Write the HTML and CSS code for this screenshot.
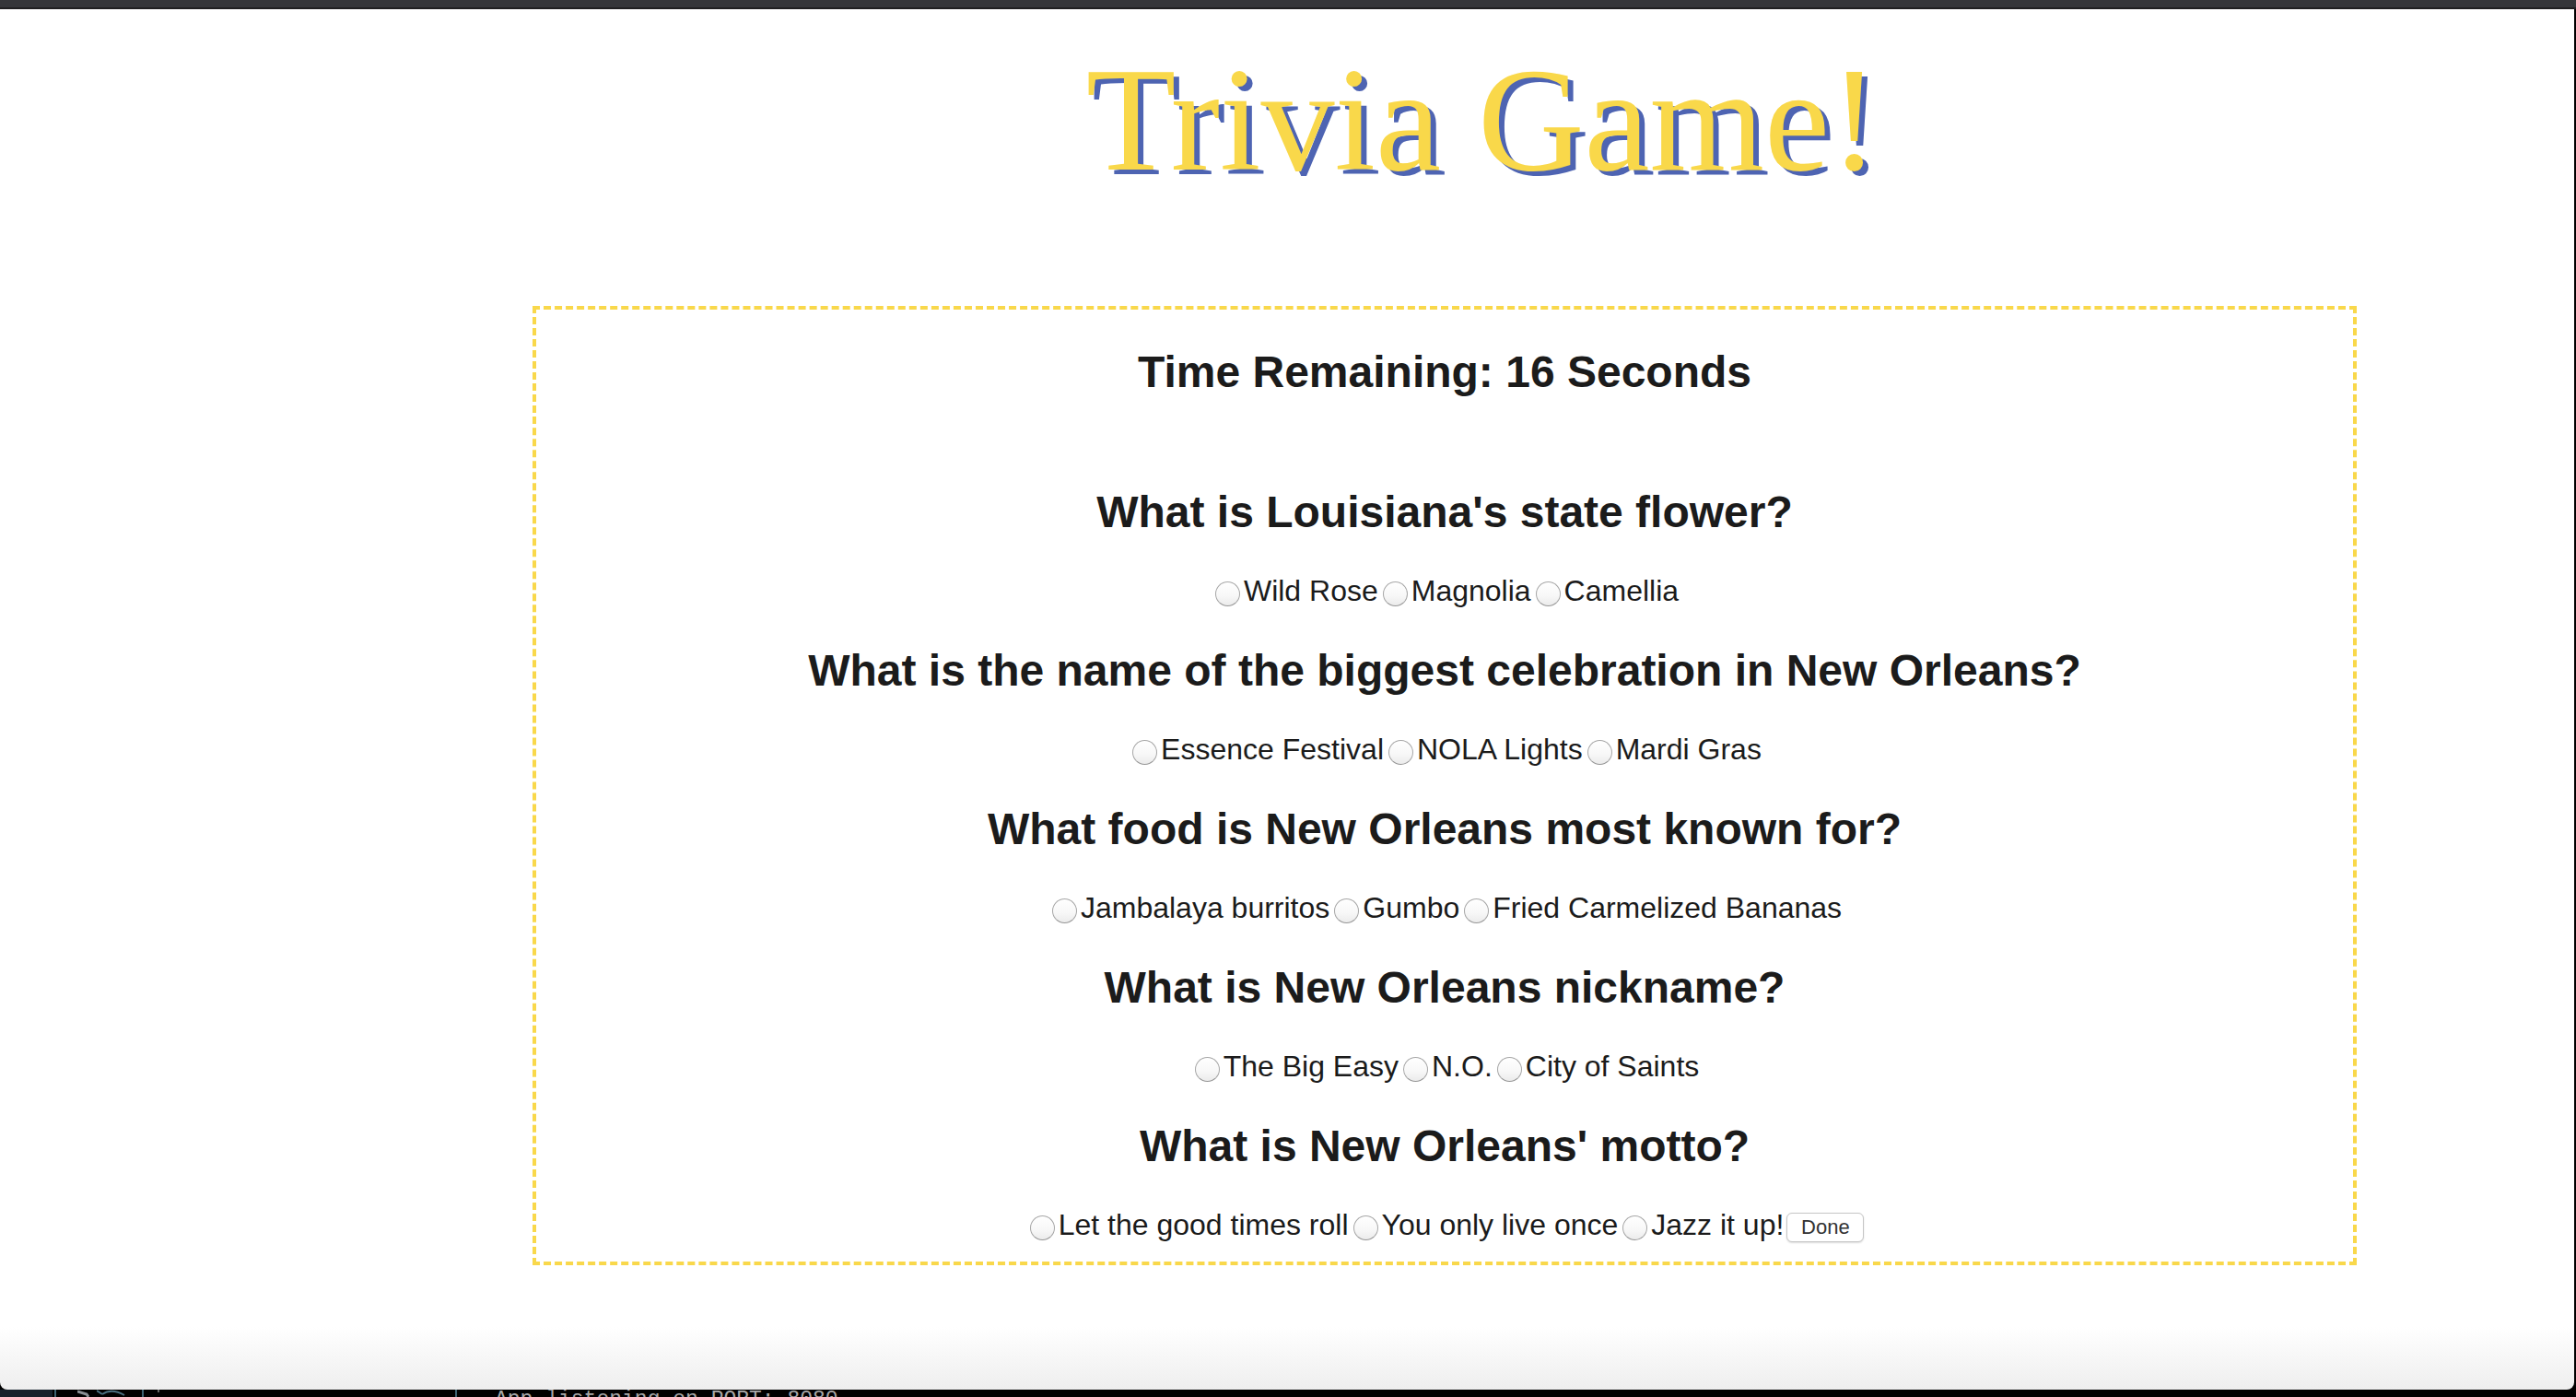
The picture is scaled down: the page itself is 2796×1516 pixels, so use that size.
FILE: index.html
```html
<!DOCTYPE html>
<html lang="en">
<head>
<meta charset="utf-8">
<title>Trivia Game</title>
<link rel="stylesheet" href="styles.css">
</head>
<body>
<div class="screen">
  <div class="topbar"></div>
  <div class="middle">
    <main class="page">
      <header class="header">
        <h1 class="title">Trivia Game!</h1>
      </header>
      <section class="quiz">
        <h2 class="timer">Time Remaining: 16 Seconds</h2>

        <div class="question">
          <h3 class="q-text">What is Louisiana's state flower?</h3>
          <div class="options">
            <label class="option"><input type="radio" name="q1" class="radio">Wild Rose</label>
            <label class="option"><input type="radio" name="q1" class="radio">Magnolia</label>
            <label class="option"><input type="radio" name="q1" class="radio">Camellia</label>
          </div>
        </div>

        <div class="question">
          <h3 class="q-text">What is the name of the biggest celebration in New Orleans?</h3>
          <div class="options">
            <label class="option"><input type="radio" name="q2" class="radio">Essence Festival</label>
            <label class="option"><input type="radio" name="q2" class="radio">NOLA Lights</label>
            <label class="option"><input type="radio" name="q2" class="radio">Mardi Gras</label>
          </div>
        </div>

        <div class="question">
          <h3 class="q-text">What food is New Orleans most known for?</h3>
          <div class="options">
            <label class="option"><input type="radio" name="q3" class="radio">Jambalaya burritos</label>
            <label class="option"><input type="radio" name="q3" class="radio">Gumbo</label>
            <label class="option"><input type="radio" name="q3" class="radio">Fried Carmelized Bananas</label>
          </div>
        </div>

        <div class="question">
          <h3 class="q-text">What is New Orleans nickname?</h3>
          <div class="options">
            <label class="option"><input type="radio" name="q4" class="radio">The Big Easy</label>
            <label class="option"><input type="radio" name="q4" class="radio">N.O.</label>
            <label class="option"><input type="radio" name="q4" class="radio">City of Saints</label>
          </div>
        </div>

        <div class="question">
          <h3 class="q-text">What is New Orleans' motto?</h3>
          <div class="options">
            <label class="option"><input type="radio" name="q5" class="radio">Let the good times roll</label>
            <label class="option"><input type="radio" name="q5" class="radio">You only live once</label>
            <label class="option"><input type="radio" name="q5" class="radio">Jazz it up!</label>
            <button class="done" type="button">Done</button>
          </div>
        </div>
      </section>
    </main>
    <div class="edge"></div>
  </div>
  <footer class="terminal">
    <div class="term-block"></div>
    <div class="term-sep sep-a"></div>
    <svg class="term-icon icon-a" width="13" height="8" viewBox="0 0 13 8"><path d="M0 2 L10 5 L12 8" stroke="#8a8f94" stroke-width="3" fill="none"/></svg>
    <svg class="term-icon icon-b" width="32" height="8" viewBox="0 0 32 8"><path d="M0 1 L6 5 M6 5 Q16 -2 30 6" stroke="#4a6f80" stroke-width="2" fill="none"/></svg>
    <div class="term-sep sep-b"></div>
    <div class="term-mark"></div>
    <div class="term-sep sep-c"></div>
    <div class="term-text">App listening on PORT: 8080</div>
  </footer>
</div>
</body>
</html>
```

FILE: styles.css
```css
html, body {
  margin: 0;
  padding: 0;
  background: #000;
}

body {
  width: 2796px;
  height: 1516px;
  overflow: hidden;
}

.screen {
  display: flex;
  flex-direction: column;
  height: 1516px;
}

.topbar {
  height: 10px;
  flex: none;
  background: linear-gradient(to bottom, #35363a 0, #35363a 8px, #1f1f21 8px, #1f1f21 10px);
}

.middle {
  display: flex;
  height: 1498px;
  flex: none;
}

.page {
  flex: 1;
  background: linear-gradient(to bottom, #ffffff 0, #ffffff 1430px, #eeeeee 100%);
  border-radius: 0 0 8px 8px;
  overflow: hidden;
}

.edge {
  width: 2px;
  flex: none;
  background: #000;
}

/* Title */
.header {
  padding-left: 424px;
  text-align: center;
}

.title {
  margin: 30px 0 0;
  font-family: "Liberation Serif", "Times New Roman", serif;
  font-weight: normal;
  font-size: 160px;
  line-height: 180px;
  color: #f9d84a;
  text-shadow: 6px 5px 0 #4e64b2;
}

/* Quiz box */
.quiz {
  margin: 112px 0 0 578px;
  width: 1980px;
  box-sizing: border-box;
  border: 4px dashed #f9d84b;
  padding: 40px 0 17px;
  text-align: center;
  font-family: "Liberation Sans", Arial, sans-serif;
  color: #1b1b1b;
}

.timer {
  margin: 0 0 96px;
  font-size: 48px;
  line-height: 56px;
  font-weight: 700;
}

.q-text {
  margin: 36px 0 35px;
  font-size: 48px;
  line-height: 56px;
  font-weight: 700;
}

.options {
  display: flex;
  justify-content: center;
  align-items: center;
  height: 45px;
  font-size: 32px;
  line-height: 45px;
}

.option {
  display: flex;
  align-items: center;
}

.radio {
  -webkit-appearance: none;
  appearance: none;
  width: 27px;
  height: 27px;
  box-sizing: border-box;
  border-radius: 50%;
  border: 1px solid #a6a6a6;
  border-bottom-color: #969696;
  background: linear-gradient(to bottom, #ffffff 0%, #f7f7f7 60%, #ebebeb 100%);
  box-shadow: inset 0 1px 1px rgba(255, 255, 255, 0.9);
  margin: 6px 4px 0 5px;
  flex: none;
}

.done {
  margin: 4px 0 0 3px;
  width: 84px;
  height: 32px;
  padding: 0;
  font-family: "Liberation Sans", Arial, sans-serif;
  font-size: 22px;
  color: #333;
  background: #fff;
  border: 1px solid #c6c6c6;
  border-radius: 6px;
  box-shadow: 0 1px 2px rgba(0, 0, 0, 0.14);
}

/* Terminal strip at bottom */
.terminal {
  height: 8px;
  flex: none;
  display: flex;
  align-items: flex-start;
  overflow: hidden;
  background: #000;
}

.term-block {
  width: 57px;
  height: 8px;
  background: #17212c;
}

.term-sep {
  width: 2px;
  height: 8px;
  background: #3d6272;
}

.sep-a { margin-left: 2px; }
.sep-b { margin-left: 17px; }
.sep-c { margin-left: 321px; }

.icon-a { margin-left: 23px; }
.icon-b { margin-left: 8px; }

.term-mark {
  margin-left: 15px;
  width: 2px;
  height: 3px;
  background: #666;
}

.term-text {
  margin-left: 41px;
  font-family: "Liberation Mono", "Courier New", monospace;
  font-size: 23px;
  line-height: 23px;
  color: #a8a8a8;
  white-space: pre;
}
```
